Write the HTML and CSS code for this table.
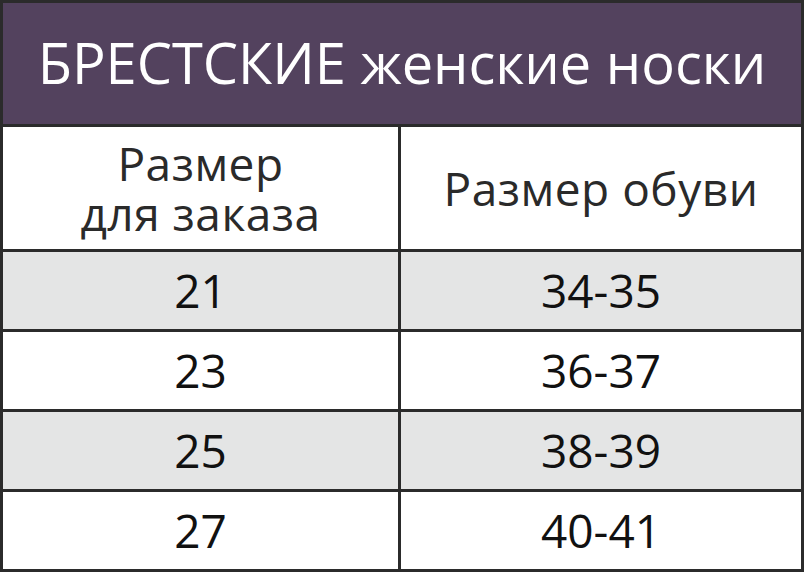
FILE: index.html
```html
<!DOCTYPE html>
<html lang="ru">
<head>
<meta charset="utf-8">
<link rel="stylesheet" href="styles.css">
</head>
<body>
<div class="sheet">
  <div class="title">БРЕСТСКИЕ женские носки</div>
  <div class="row head">
    <div class="cell"><span class="line">Размер</span><span class="line">для заказа</span></div>
    <div class="cell">Размер обуви</div>
  </div>
  <div class="row shade">
    <div class="cell num">21</div>
    <div class="cell num">34-35</div>
  </div>
  <div class="row">
    <div class="cell num">23</div>
    <div class="cell num">36-37</div>
  </div>
  <div class="row shade">
    <div class="cell num">25</div>
    <div class="cell num">38-39</div>
  </div>
  <div class="row last">
    <div class="cell num">27</div>
    <div class="cell num">40-41</div>
  </div>
</div>
</body>
</html>
```
FILE: styles.css
```css
html, body {
  margin: 0;
  padding: 0;
  background: #ffffff;
}
.sheet {
  width: 804px;
  height: 572px;
  box-sizing: border-box;
  border: 3px solid #2b2b2b;
  display: grid;
  grid-template-rows: 124px 125px 80px 80px 80px 1fr;
  font-family: "Open Sans", "DejaVu Sans", sans-serif;
}
.title {
  background: #53425e;
  color: #ffffff;
  border-bottom: 3px solid #2b2b2b;
  box-sizing: border-box;
  display: flex;
  align-items: center;
  justify-content: center;
  font-size: 56px;
  padding-bottom: 4px;
}
.row {
  display: grid;
  grid-template-columns: 398px 1fr;
  border-bottom: 3px solid #2b2b2b;
  box-sizing: border-box;
}
.row.last {
  border-bottom: none;
}
.row.shade {
  background: #e4e5e5;
}
.cell {
  display: flex;
  flex-direction: column;
  align-items: center;
  justify-content: center;
  text-align: center;
  color: #2a2a2a;
  font-size: 46px;
  line-height: 1.1;
}
.head .cell {
  letter-spacing: 0.5px;
}
.line {
  display: block;
  line-height: 50px;
}
.cell:first-child {
  border-right: 3px solid #2b2b2b;
}
.num {
  color: #111111;
  font-size: 46px;
  letter-spacing: 0;
}
```
